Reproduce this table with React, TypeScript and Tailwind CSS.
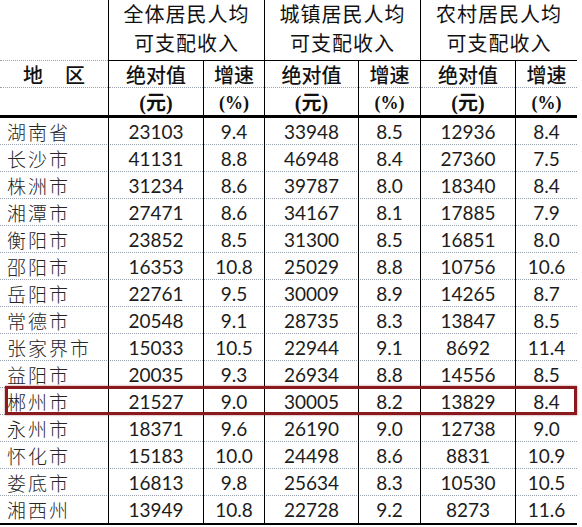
import React from "react";

type Row = [string, string, string, string, string, string, string];

const rows: Row[] = [
  ["湖南省", "23103", "9.4", "33948", "8.5", "12936", "8.4"],
  ["长沙市", "41131", "8.8", "46948", "8.4", "27360", "7.5"],
  ["株洲市", "31234", "8.6", "39787", "8.0", "18340", "8.4"],
  ["湘潭市", "27471", "8.6", "34167", "8.1", "17885", "7.9"],
  ["衡阳市", "23852", "8.5", "31300", "8.5", "16851", "8.0"],
  ["邵阳市", "16353", "10.8", "25029", "8.8", "10756", "10.6"],
  ["岳阳市", "22761", "9.5", "30009", "8.9", "14265", "8.7"],
  ["常德市", "20548", "9.1", "28735", "8.3", "13847", "8.5"],
  ["张家界市", "15033", "10.5", "22944", "9.1", "8692", "11.4"],
  ["益阳市", "20035", "9.3", "26934", "8.8", "14556", "8.5"],
  ["郴州市", "21527", "9.0", "30005", "8.2", "13829", "8.4"],
  ["永州市", "18371", "9.6", "26190", "9.0", "12738", "9.0"],
  ["怀化市", "15183", "10.0", "24498", "8.6", "8831", "10.9"],
  ["娄底市", "16813", "9.8", "25634", "8.3", "10530", "10.5"],
  ["湘西州", "13949", "10.8", "22728", "9.2", "8273", "11.6"],
];

const cols = "grid grid-cols-[108px_95px_61px_94px_62px_95px_62px]";
const head = "font-['Liberation_Serif','Noto_Sans_CJK_SC',serif] text-[20px] text-[#111]";
const num = "font-['Lato','Liberation_Sans',sans-serif] text-[19px] text-[#1c1c1c]";

export default function App() {
  const groups = ["全体居民人均", "城镇居民人均", "农村居民人均"];

  return (
    <div className="w-[582px] h-[527px] bg-white overflow-hidden">
      <div className="relative w-[577px]">
        {/* header */}
        <div className={`${cols} ${head} border-b-[3px] border-black`}>
          <div className="h-[61px] border-b border-dotted border-gray-400" />
          {groups.map((g) => (
            <div
              key={g}
              className="col-span-2 h-[61px] border-l border-b border-black flex flex-col items-center justify-center leading-[29px] tracking-[1px]"
            >
              <span>{g}</span>
              <span>可支配收入</span>
            </div>
          ))}

          <div className="h-[27px] border-b border-dotted border-gray-400 flex items-center justify-center leading-[22px] pt-[3px] font-medium">
            地<span className="w-[22px]" />区
          </div>
          {groups.map((g) => (
            <React.Fragment key={g + "a"}>
              <div className="h-[27px] border-l border-black flex flex-col">
                <div className="flex-1 min-h-0 flex items-center justify-center leading-[22px] pt-[3px] font-medium">
                  绝对值
                </div>
                <div className="border-b border-dotted border-gray-400" />
              </div>
              <div className="h-[27px] border-l border-black flex flex-col">
                <div className="flex-1 min-h-0 flex items-center justify-center leading-[22px] pt-[3px] font-medium">
                  增速
                </div>
                <div className="border-b border-dotted border-gray-400" />
              </div>
            </React.Fragment>
          ))}

          <div className="h-[27px]" />
          {groups.map((g) => (
            <React.Fragment key={g + "b"}>
              <div className="h-[27px] border-l border-black flex items-center justify-center leading-[22px] pt-[3px] font-semibold">
                (元)
              </div>
              <div className="h-[27px] border-l border-black flex items-center justify-center leading-[22px] pt-[3px] font-semibold text-[18px]">
                (%)
              </div>
            </React.Fragment>
          ))}
        </div>

        {/* body */}
        <div className="border-b-2 border-black">
          {rows.map((r, i) => (
            <div
              key={r[0]}
              className={`${cols} h-[27px] ${
                i < rows.length - 1 ? "border-b border-dotted border-gray-400" : ""
              }`}
            >
              <div className="flex items-center pl-[7px] font-['Noto_Sans_CJK_SC',sans-serif] font-light text-[19px] tracking-[2px] text-[#262626]">
                {r[0]}
              </div>
              {r.slice(1).map((v, j) => (
                <div
                  key={j}
                  className={`border-l border-black flex items-center justify-center ${num}`}
                >
                  {v}
                </div>
              ))}
            </div>
          ))}
        </div>

        {/* highlight box */}
        <div className="absolute left-[5px] top-[386px] w-[572px] h-[29px] border-[3px] border-[#8b1a1f] shadow-[0_0_2px_rgba(139,26,31,0.6)] pointer-events-none" />
      </div>
    </div>
  );
}
